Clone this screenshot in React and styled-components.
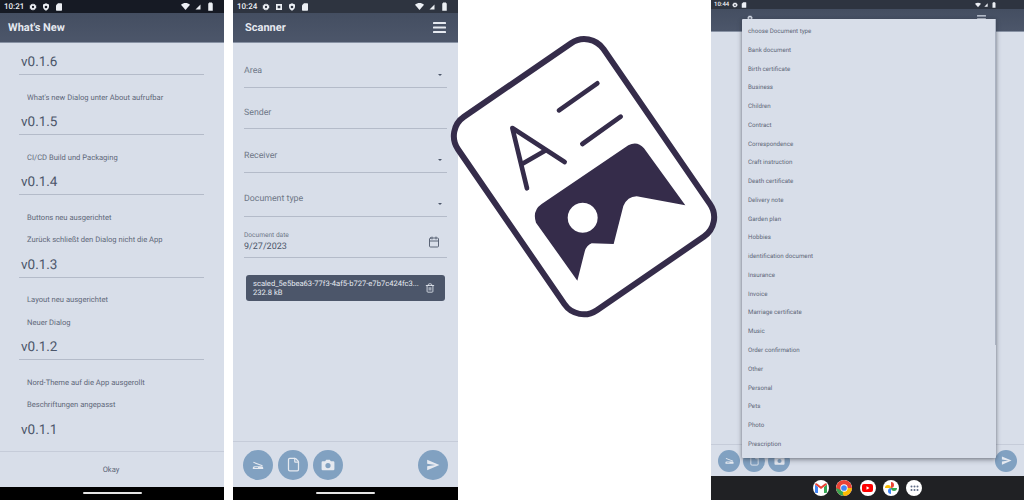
import React from 'react';
import styled, { createGlobalStyle } from 'styled-components';
import { Calendar, Trash2, File } from 'lucide-react';

const Global = createGlobalStyle`
  html, body { margin: 0; padding: 0; background: #fff; overflow: hidden; }
  * { box-sizing: border-box; }
  body { font-family: Roboto, "Liberation Sans", sans-serif; text-rendering: geometricPrecision; }
`;

const Page = styled.div`
  width: 1024px; height: 500px; display: flex; background: #fff; overflow: hidden; position: relative;
`;
const Phone = styled.div`
  width: ${p => p.$w}px; margin-left: ${p => p.$ml || 0}px; height: 500px; flex: none;
  display: flex; flex-direction: column; background: #d8dee9; position: relative; overflow: hidden;
`;
const Status = styled.div`
  height: ${p => p.$h}px; flex: none; background: ${p => p.$bg}; color: #eceff4;
  display: flex; align-items: center; padding: 0 ${p => p.$pr}px 0 ${p => p.$pl}px;
  gap: ${p => p.$gap}px; font-size: ${p => p.$fs}px; font-weight: 500;
`;
const Spacer = styled.div`flex: 1;`;
const Header = styled.div`
  height: ${p => p.$h}px; flex: none; background: linear-gradient(#444e61, #4c566a);
  border-bottom: 1px solid #8892a4;
  display: flex; align-items: center; justify-content: space-between;
  padding: 0 ${p => p.$pr}px 0 ${p => p.$pl}px; color: #e5e9f0; font-size: 11px; font-weight: 700;
`;
const Changes = styled.div`flex: 1; padding: 5px 20px 0 19px; overflow: hidden;`;
const Section = styled.div`padding-top: 2px;`;
const Version = styled.div`
  height: 25px; border-bottom: 1px solid ${p => (p.$last ? 'transparent' : '#b4bbc9')}; font-size: 13.5px; line-height: 25px;
  padding-left: 2px; color: #4c566a;
`;
const Notes = styled.div`margin-top: 10.5px;`;
const Note = styled.div`
  height: 22.5px; line-height: 23px; font-size: 7.6px; padding-left: 8px; color: #5f6879;
`;
const DialogAction = styled.div`
  height: 36px; flex: none; border-top: 1px solid #c6ccd9; display: flex; align-items: center;
  justify-content: center; font-size: 7.6px; color: #5f6879; padding-right: 2px;
`;
const NavBar = styled.div`
  height: 13px; flex: none; background: #000; display: flex; justify-content: center; align-items: center; padding-bottom: 1px;
`;
const Pill = styled.div`width: 59px; height: 2.5px; border-radius: 2px; background: #e5e5e5;`;

const Form = styled.div`flex: 1; padding: 0 11px; display: flex; flex-direction: column;`;
const Field = styled.div`
  height: ${p => p.$h}px; flex: none; border-bottom: 1px solid #b4bbc9; position: relative;
  display: flex; flex-direction: column; justify-content: flex-end;
  padding-bottom: ${p => p.$pb}px; font-size: 8.8px; color: #6e7787;
`;
const Caret = styled.span`
  position: absolute; right: 5px; bottom: ${p => p.$b}px; width: 0; height: 0;
  border-left: 2.5px solid transparent; border-right: 2.5px solid transparent; border-top: 2.5px solid #4c566a;
`;
const SmallLabel = styled.div`font-size: 6.6px; color: #6e7787; line-height: 9px; margin-bottom: 2px;`;
const Value = styled.div`font-size: 9px; color: #4c566a; line-height: 11px;`;
const DateIcon = styled.span`position: absolute; right: 7px; bottom: 9px; display: flex; color: #5b6476;`;
const Chip = styled.div`
  height: 26px; margin: 17px 2px 0; background: #4c566a; border-radius: 3px; color: #e5e9f0;
  display: flex; align-items: center; justify-content: space-between; padding: 0 10px 0 7px;
  font-size: 7.6px; line-height: 9px; white-space: nowrap;
`;
const Footer = styled.div`
  height: ${p => p.$h}px; flex: none; border-top: 1px solid #c6ccd9; display: flex; align-items: center;
  gap: ${p => p.$gap}px; padding: 0 ${p => p.$pr}px 0 ${p => p.$pl}px;
`;
const Round = styled.div`
  width: ${p => p.$d}px; height: ${p => p.$d}px; border-radius: 50%; background: #81a1c1; color: #e5e9f0;
  display: flex; align-items: center; justify-content: center; flex: none;
`;

const Grow = styled.div`flex: 1;`;
const Body3 = styled.div`flex: 1;`;
const Dock = styled.div`
  height: 24px; flex: none; background: #202124; display: flex; align-items: center; justify-content: center; gap: 7.3px;
`;
const DockIcon = styled.div`
  width: 16px; height: 16px; border-radius: 50%; background: #fff; display: flex; align-items: center; justify-content: center; overflow: hidden;
`;
const Dropdown = styled.div`
  position: absolute; left: 31px; top: 19px; width: 254px; height: 439px; background: #d8dee9;
  box-shadow: 0 2px 5px rgba(46,52,64,.45), 0 0 3px rgba(46,52,64,.3); padding-top: 3px; border-radius: 1px;
`;
const Thumb = styled.div`position: absolute; right: 0; top: 0; width: 1.5px; height: 326px; background: #aab2c1;`;
const Option = styled.div`
  height: 18.78px; line-height: 18.78px; padding-left: 6px; font-size: 6.2px; color: #5f6879; white-space: nowrap;
`;
const Peek = styled.div`position: absolute; top: 15px; left: ${p => p.$x}px; color: #d8dee9; display: flex;`;

const LogoSlot = styled.div`flex: none; width: 253px; height: 500px; position: relative; z-index: 2;`;
const LogoArt = styled.svg`position: absolute; left: -18px; top: 30px; overflow: visible;`;

const Gear = ({ s = 8 }) => (
  <svg width={s} height={s} viewBox="0 0 24 24" fill="currentColor"><path fillRule="evenodd" d="M12 1l2.200 3.200 3.800-.9.8 3.800 3.700 1.100-1.600 3.500 1.600 3.600-3.700 1-.8 3.800-3.800-.9L12 23l-2.200-3.200-3.800.9-.8-3.800-3.700-1 1.600-3.600L1.500 8.200l3.700-1.100.8-3.800 3.800.9z M12 8.500a3.500 3.500 0 1 0 0 7a3.500 3.500 0 0 0 0-7z"/></svg>
);
const Shield = ({ s = 8 }) => (
  <svg width={s} height={s} viewBox="0 0 24 24" fill="currentColor"><path fillRule="evenodd" d="M12 1l9 3.500v7c0 5.500-4 9.500-9 11.500-5-2-9-6-9-11.500v-7z M12 8a4 4 0 1 0 0 8a4 4 0 0 0 0-8z"/></svg>
);
const Sd = ({ s = 8 }) => (
  <svg width={s} height={s} viewBox="0 0 24 24" fill="currentColor"><path d="M9 1h10a2 2 0 0 1 2 2v18a2 2 0 0 1-2 2H5a2 2 0 0 1-2-2V7z"/></svg>
);
const Square = ({ s = 8 }) => (
  <svg width={s} height={s} viewBox="0 0 24 24" fill="currentColor"><path fillRule="evenodd" d="M3 3h18v18H3z M8 8v8h8V8z"/></svg>
);
const Wifi = ({ s = 9 }) => (
  <svg width={s} height={s} viewBox="0 0 24 24" fill="currentColor"><path d="M12 21L0 7c3.500-3 7.500-4.500 12-4.500S20.500 4 24 7z"/></svg>
);
const Signal = ({ s = 8 }) => (
  <svg width={s} height={s} viewBox="0 0 24 24" fill="currentColor"><path d="M22 2v20H2z"/></svg>
);
const Battery = ({ s = 9 }) => (
  <svg width={s} height={s} viewBox="0 0 24 24" fill="currentColor"><path d="M8 1h8v2h2v20H6V3h2z"/></svg>
);
const Burger = ({ w = 13, h = 11 }) => (
  <svg width={w} height={h} viewBox="0 0 13 11" fill="currentColor"><rect width="13" height="2" rx=".6"/><rect y="4.500" width="13" height="2" rx=".6"/><rect y="9" width="13" height="2" rx=".6"/></svg>
);
const Scanner = ({ s = 14 }) => (
  <svg width={s} height={s} viewBox="0 0 24 24" fill="currentColor"><path d="M4.500 6.500l15.500 5.800-.7 1.700L3.800 8.300z"/><path fillRule="evenodd" d="M6 14h12a3 3 0 0 1 3 3v1a1 1 0 0 1-1 1H4a1 1 0 0 1-1-1v-1a3 3 0 0 1 3-3z M6 16v1h6v-1z"/></svg>
);
const CameraFill = ({ s = 14 }) => (
  <svg width={s} height={s} viewBox="0 0 24 24" fill="currentColor"><path fillRule="evenodd" d="M9 3h6l2 2.500h4a2 2 0 0 1 2 2V19a2 2 0 0 1-2 2H3a2 2 0 0 1-2-2V7.500a2 2 0 0 1 2-2h4z M12 8.500a4.500 4.500 0 1 0 0 9a4.500 4.500 0 0 0 0-9z"/></svg>
);
const SendFill = ({ s = 14 }) => (
  <svg width={s} height={s} viewBox="0 0 24 24" fill="currentColor"><path d="M2 3l21 9-21 9v-7l14-2-14-2z"/></svg>
);

const Logo = () => (
  <LogoArt width="285" height="295" viewBox="0 0 855 885">
    <rect x="167" y="88" width="530" height="704" rx="70" fill="#fff" stroke="#352c4a" strokeWidth="18"
      transform="rotate(-34.500 432 440)" />
    <g fill="none" stroke="#352c4a" strokeWidth="14" strokeLinecap="round" strokeLinejoin="round">
      <path d="M261 475L217 294L374 396" />
      <path d="M250 400L315 362" />
      <path d="M357 241L472 160" />
      <path d="M427 342L542 260" />
    </g>
    <path fill="#352c4a" fillRule="evenodd" d="M305 522L565 346Q592 332 612 355L736 526L590 499Q562 500 550 528L521 642L455 640Q440 645 434 665L412 752L288 578Q276 542 305 522Z M428 518a45 45 0 1 0 0.100 0Z" />
  </LogoArt>
);

const changelog = [
  ['v0.1.6', ["What's new Dialog unter About aufrufbar"]],
  ['v0.1.5', ['CI/CD Build und Packaging']],
  ['v0.1.4', ['Buttons neu ausgerichtet', 'Zurück schließt den Dialog nicht die App']],
  ['v0.1.3', ['Layout neu ausgerichtet', 'Neuer Dialog']],
  ['v0.1.2', ['Nord-Theme auf die App ausgerollt', 'Beschriftungen angepasst']],
  ['v0.1.1', []],
];

const options = ['choose Document type','Bank document','Birth certificate','Business','Children','Contract','Correspondence','Craft instruction','Death certificate','Delivery note','Garden plan','Hobbies','identification document','Insurance','Invoice','Marriage certificate','Music','Order confirmation','Other','Personal','Pets','Photo','Prescription'];

export default function App() {
  return (
    <Page>
      <Global />
      <Phone $w={224}>
        <Status $h={13} $bg="#161a24" $pl={4} $pr={9} $gap={5} $fs={8}>
          10:21 <Gear /> <Shield /> <Sd /><Spacer /><Wifi /><Signal s={6} /><Battery />
        </Status>
        <Header $h={30} $pl={8} $pr={8}>What's New</Header>
        <Changes>
          {changelog.map(([v, notes]) => (
            <Section key={v}>
              <Version $last={notes.length === 0}>{v}</Version>
              <Notes>{notes.map(n => <Note key={n}>{n}</Note>)}</Notes>
            </Section>
          ))}
        </Changes>
        <DialogAction>Okay</DialogAction>
        <NavBar><Pill /></NavBar>
      </Phone>

      <Phone $w={225} $ml={9}>
        <Status $h={13} $bg="#2e3440" $pl={4} $pr={9} $gap={5} $fs={8}>
          10:24 <Gear /> <Square /> <Shield /> <Sd /><Spacer /><Wifi /><Signal s={6} /><Battery />
        </Status>
        <Header $h={30} $pl={12} $pr={12}>Scanner<Burger /></Header>
        <Form>
          <Field $h={45} $pb={11}>Area<Caret $b={11} /></Field>
          <Field $h={41} $pb={10}>Sender</Field>
          <Field $h={44} $pb={11}>Receiver<Caret $b={11} /></Field>
          <Field $h={44} $pb={12}>Document type<Caret $b={11} /></Field>
          <Field $h={41} $pb={4}>
            <SmallLabel>Document date</SmallLabel>
            <Value>9/27/2023</Value>
            <DateIcon><Calendar size={12} /></DateIcon>
          </Field>
          <Chip>
            <div>scaled_5e5bea63-77f3-4af5-b727-e7b7c424fc3...<br />232.8 kB</div>
            <Trash2 size={10} />
          </Chip>
        </Form>
        <Footer $h={46} $gap={5} $pl={10} $pr={10}>
          <Round $d={30}><Scanner /></Round>
          <Round $d={30}><File size={15} /></Round>
          <Round $d={30}><CameraFill /></Round>
          <Grow />
          <Round $d={30}><SendFill /></Round>
        </Footer>
        <NavBar><Pill /></NavBar>
      </Phone>

      <LogoSlot><Logo /></LogoSlot>

      <Phone $w={313}>
        <Status $h={9} $bg="#2e3440" $pl={3} $pr={27} $gap={3} $fs={6}>
          10:44 <Gear s={6} /> <Sd s={6} /><Spacer /><Wifi s={6} /><Signal s={4} /><Battery s={6} />
        </Status>
        <Header $h={23} $pl={8} $pr={8}></Header>
        <Peek $x={36}><Gear s={6} /></Peek>
        <Peek $x={266}><Burger w={9} h={8} /></Peek>
        <Body3 />
        <Footer $h={32} $gap={3} $pl={7} $pr={7}>
          <Round $d={22}><Scanner s={11} /></Round>
          <Round $d={22}><File size={11} /></Round>
          <Round $d={22}><CameraFill s={11} /></Round>
          <Grow />
          <Round $d={22}><SendFill s={11} /></Round>
        </Footer>
        <Dock>
          <DockIcon>
            <svg width="12" height="10" viewBox="0 0 24 20"><path fill="#4285f4" d="M0 3v15a2 2 0 0 0 2 2h4V8z"/><path fill="#34a853" d="M24 3v15a2 2 0 0 1-2 2h-4V8z"/><path fill="#ea4335" d="M0 3l12 9 12-9a3 3 0 0 0-4-2l-8 6-8-6a3 3 0 0 0-4 2z"/></svg>
          </DockIcon>
          <DockIcon>
            <svg width="16" height="16" viewBox="0 0 24 24"><circle cx="12" cy="12" r="12" fill="#ea4335"/><path fill="#34a853" d="M12 12L1.600 18A12 12 0 0 0 12 24z"/><path fill="#34a853" d="M0 12a12 12 0 0 0 1.600 6L7 15z"/><path fill="#fbbc04" d="M12 12h12a12 12 0 0 1-12 12l-2-3z"/><circle cx="12" cy="12" r="5.500" fill="#fff"/><circle cx="12" cy="12" r="4.300" fill="#4285f4"/></svg>
          </DockIcon>
          <DockIcon>
            <svg width="11" height="8" viewBox="0 0 22 16"><rect width="22" height="16" rx="4" fill="#f00"/><path fill="#fff" d="M9 4.500l6 3.500-6 3.500z"/></svg>
          </DockIcon>
          <DockIcon>
            <svg width="12" height="12" viewBox="0 0 24 24"><path fill="#ea4335" d="M12 12V0a6 6 0 0 1 0 12z"/><path fill="#fbbc04" d="M12 12H0a6 6 0 0 1 12 0z"/><path fill="#4285f4" d="M12 12v12a6 6 0 0 1 0-12z"/><path fill="#34a853" d="M12 12h12a6 6 0 0 1-12 0z"/></svg>
          </DockIcon>
          <DockIcon>
            <svg width="9" height="7" viewBox="0 0 18 14" fill="#5f6b85"><circle cx="3" cy="3" r="2"/><circle cx="9" cy="3" r="2"/><circle cx="15" cy="3" r="2"/><circle cx="3" cy="10" r="2"/><circle cx="9" cy="10" r="2"/><circle cx="15" cy="10" r="2"/></svg>
          </DockIcon>
        </Dock>
        <Dropdown>
          <Thumb />
          {options.map(o => <Option key={o}>{o}</Option>)}
        </Dropdown>
      </Phone>
    </Page>
  );
}
